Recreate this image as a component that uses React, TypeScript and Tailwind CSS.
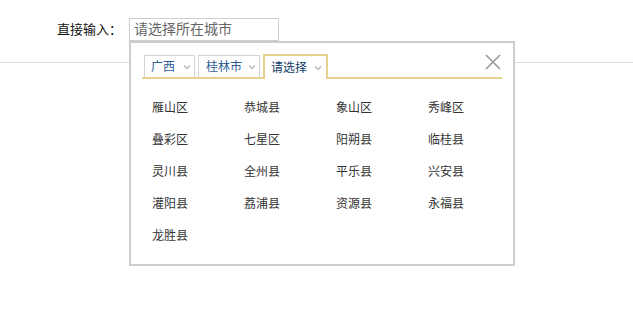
import React from "react";

const areas = [
  "雁山区", "恭城县", "象山区", "秀峰区",
  "叠彩区", "七星区", "阳朔县", "临桂县",
  "灵川县", "全州县", "平乐县", "兴安县",
  "灌阳县", "荔浦县", "资源县", "永福县",
  "龙胜县",
];

function Chevron() {
  return (
    <svg width="8" height="6" viewBox="0 0 8 6" className="block">
      <path d="M1 1.5 L4 4.5 L7 1.5" fill="none" stroke="#b8b8b8" strokeWidth="1.4" />
    </svg>
  );
}

export default function App() {
  return (
    <div className="relative h-[309px] w-[633px] overflow-hidden bg-white font-['Liberation_Sans','Noto_Sans_CJK_SC',sans-serif]">
      <div className="h-[63px] border-b border-[#dcdcdc]">
        <div className="flex items-start pl-[57px] pt-[18px]">
          <span className="mr-[7px] mt-[3px] text-[13px] leading-[17px] text-[#111]">直接输入：</span>
          <div className="relative">
            <div className="flex h-[23px] w-[150px] items-center border border-[#cfcfcf] bg-white pl-[4px] text-[14px] text-[#666]">
              请选择所在城市
            </div>
            <div className="absolute left-0 top-[23px] z-10 h-[225px] w-[386px] border-2 border-[#cdcdcd] bg-white px-[11px] pt-[11px]">
              <div className="relative flex border-b-2 border-[#e8d08e] pl-[2px]">
                <div className="mr-[3px] mt-[1px] flex h-[22px] items-center border border-b-0 border-[#d4d4d4] pl-[6px] pr-[3px] text-[12px] text-[#2b5c95]">
                  <span>广西</span>
                  <span className="ml-[8px]"><Chevron /></span>
                </div>
                <div className="mr-[3px] mt-[1px] flex h-[22px] items-center border border-b-0 border-[#d4d4d4] pl-[7px] pr-[3px] text-[12px] text-[#2b5c95]">
                  <span>桂林市</span>
                  <span className="ml-[6px]"><Chevron /></span>
                </div>
                <div className="-mb-[2px] flex h-[25px] items-center border-2 border-b-0 border-[#e8d08e] bg-white pl-[6px] pr-[4px] text-[12px] text-[#0d3b66]">
                  <span>请选择</span>
                  <span className="ml-[7px]"><Chevron /></span>
                </div>
                <button className="absolute right-[1px] top-0 h-[16px] w-[16px]">
                  <svg width="16" height="16" viewBox="0 0 16 16" className="block">
                    <path d="M1 1 L15 15 M15 1 L1 15" stroke="#9a9a9a" strokeWidth="1.6" fill="none" />
                  </svg>
                </button>
              </div>
              <div className="grid grid-cols-[92px_92px_92px_92px] pl-[10px] pt-[13px]">
                {areas.map((a) => (
                  <div key={a} className="h-[32px] text-[12px] leading-[32px] text-[#333]">
                    {a}
                  </div>
                ))}
              </div>
            </div>
          </div>
        </div>
      </div>
    </div>
  );
}
